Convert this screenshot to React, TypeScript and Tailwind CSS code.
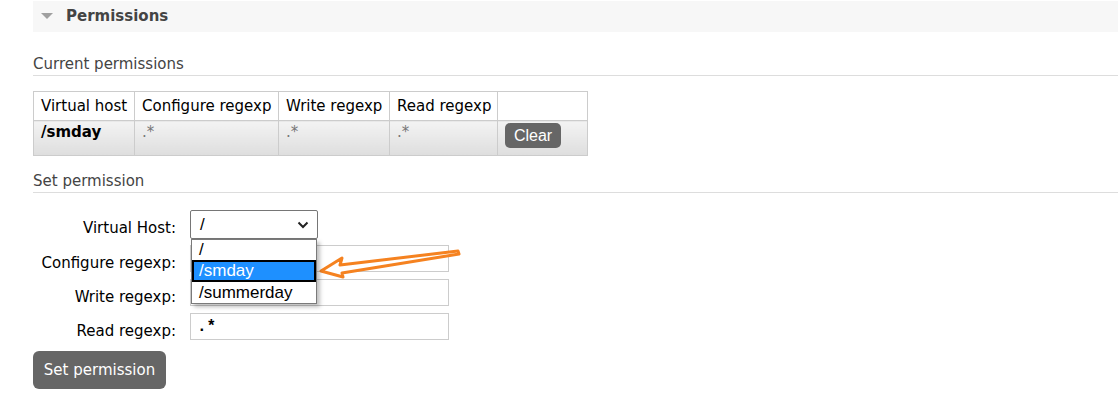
export default function App() {
  const labelCls = "w-[143px] shrink-0 mt-[8px] text-right leading-[20px] whitespace-nowrap";
  const inputCls = "ml-[14px] h-[27px] w-[259px] border border-[#ccc] bg-white";
  const thCls = "border border-[#ccc] pl-[7px] pr-0 text-left font-normal leading-[20px] whitespace-nowrap";
  const tdCls = "border border-[#ccc] bg-linear-to-b from-[#f3f3f3] to-[#dedede] pl-[7px] pr-0 pt-[1px] align-top leading-[20px] whitespace-nowrap";

  return (
    <div className="relative min-h-[402px] bg-white pl-[33px] pt-px text-[15px] text-black font-['DejaVu_Sans',Verdana,sans-serif]">
      {/* Section header */}
      <div className="flex h-[31px] items-center bg-[#f7f7f7]">
        <svg width="12" height="7" viewBox="0 0 12 7" className="ml-[8px]">
          <polygon points="0,0 12,0 6,6" fill="#a0a0a0" />
        </svg>
        <span className="ml-[13px] font-bold leading-none text-[#444]">Permissions</span>
      </div>

      {/* Current permissions */}
      <h2 className="mt-[22px] border-b border-[#ddd] pb-[1px] leading-[20px] text-[#444]">Current permissions</h2>

      <table className="mt-[15px] w-[554px] table-fixed border-collapse">
        <colgroup>
          <col className="w-[101px]" />
          <col className="w-[144px]" />
          <col className="w-[111px]" />
          <col className="w-[108px]" />
          <col className="w-[90px]" />
        </colgroup>
        <thead>
          <tr className="h-[29px]">
            <th className={thCls}>Virtual host</th>
            <th className={thCls}>Configure regexp</th>
            <th className={thCls}>Write regexp</th>
            <th className={thCls}>Read regexp</th>
            <th className="border border-[#ccc]"></th>
          </tr>
        </thead>
        <tbody>
          <tr className="h-[35px]">
            <td className={tdCls + " font-bold"}>/smday</td>
            <td className={tdCls + " text-[#777]"}>.*</td>
            <td className={tdCls + " text-[#777]"}>.*</td>
            <td className={tdCls + " text-[#777]"}>.*</td>
            <td className="border border-[#ccc] bg-linear-to-b from-[#f3f3f3] to-[#dedede] px-[7px] pt-[2px] align-top">
              <button className="flex h-[25px] w-[56px] items-center justify-center rounded-[5px] bg-[#666] font-['Liberation_Sans',Arial,sans-serif] text-[16px] leading-none text-white">
                Clear
              </button>
            </td>
          </tr>
        </tbody>
      </table>

      {/* Set permission */}
      <h2 className="mt-[15px] border-b border-[#ddd] pb-[1px] leading-[20px] text-[#444]">Set permission</h2>

      <div className="mt-[17px]">
        <div className="flex h-[29px] items-start">
          <label className={labelCls}>Virtual Host:</label>
          <div className="relative ml-[14px] h-[29px] w-[128px]">
            <div className="flex h-full items-center justify-between rounded-[2px] border border-[#767676] bg-white pl-[9px] pr-[8px] font-['Liberation_Sans',Arial,sans-serif] text-[17px]">
              <span>/</span>
              <svg width="12" height="8" viewBox="0 0 12 8">
                <path d="M1.5 1.5 L6 6 L10.5 1.5" fill="none" stroke="#222" strokeWidth="2" />
              </svg>
            </div>
            {/* open dropdown */}
            <div className="absolute left-[1px] top-[29px] z-10 w-[126px] border border-[#7a7a7a] bg-white font-['Liberation_Sans',Arial,sans-serif] text-[17px] shadow-[3px_3px_4px_rgba(0,0,0,0.25)]">
              <div className="flex h-[20px] items-center px-[7px]">/</div>
              <div className="flex h-[22px] items-center border-2 border-black bg-[#1e90ff] px-[5px] text-white">/smday</div>
              <div className="flex h-[21px] items-center px-[7px]">/summerday</div>
            </div>
          </div>
        </div>

        <div className="mt-[6px] flex h-[27px] items-start">
          <label className={labelCls}>Configure regexp:</label>
          <div className={inputCls}></div>
        </div>
        <div className="mt-[7px] flex h-[27px] items-start">
          <label className={labelCls}>Write regexp:</label>
          <div className={inputCls}></div>
        </div>
        <div className="mt-[7px] flex h-[27px] items-start">
          <label className={labelCls}>Read regexp:</label>
          <div className={inputCls + " flex items-center pl-[6px] font-['Liberation_Mono','Courier_New',monospace] text-[16px] font-bold"}>.*</div>
        </div>

        <button className="mt-[11px] h-[38px] w-[133px] rounded-[6px] bg-[#666] text-[15px] text-white">Set permission</button>
      </div>

      {/* annotation arrow */}
      <svg className="absolute left-[315px] top-[245px]" width="150" height="36" viewBox="0 0 150 36">
        <polygon
          points="6,26 27,13 25,20 143,6 144,9 27,28 28,32"
          fill="#fff"
          stroke="#f58220"
          strokeWidth="3"
          strokeLinejoin="round"
        />
      </svg>
    </div>
  );
}
